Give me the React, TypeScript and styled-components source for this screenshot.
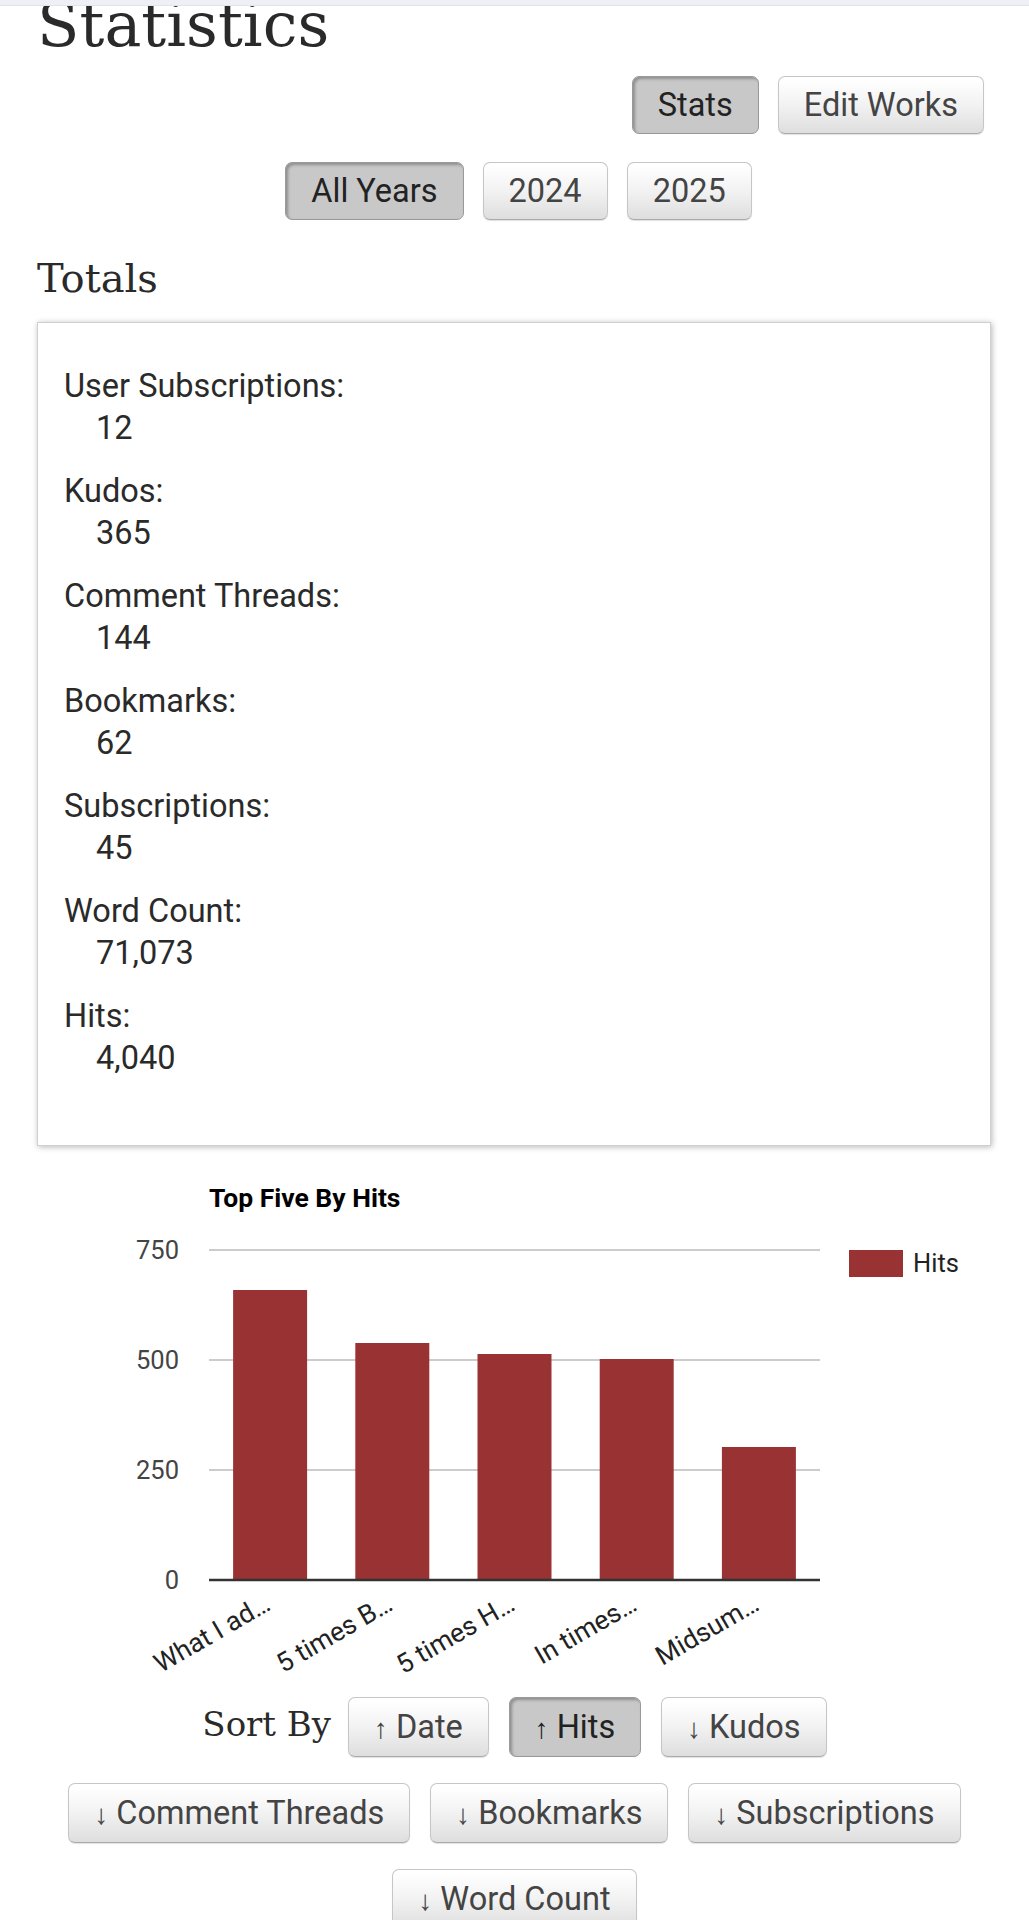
import React from "react";
import styled, { createGlobalStyle } from "styled-components";

const GlobalStyle = createGlobalStyle`
  html, body {
    margin: 0;
    padding: 0;
    background: #fff;
  }
  body {
    font-family: Roboto, "Liberation Sans", Arial, sans-serif;
    color: #2a2a2a;
  }
`;

const totals = [
  { label: "User Subscriptions:", value: "12" },
  { label: "Kudos:", value: "365" },
  { label: "Comment Threads:", value: "144" },
  { label: "Bookmarks:", value: "62" },
  { label: "Subscriptions:", value: "45" },
  { label: "Word Count:", value: "71,073" },
  { label: "Hits:", value: "4,040" },
];

const bars = [
  { title: "What I ad…", height: 290 },
  { title: "5 times B…", height: 237 },
  { title: "5 times H…", height: 226 },
  { title: "In times…", height: 221 },
  { title: "Midsum…", height: 133 },
];

const sortOptions = [
  { arrow: "↑", label: "Date" },
  { arrow: "↑", label: "Hits", current: true },
  { arrow: "↓", label: "Kudos" },
  { arrow: "↓", label: "Comment Threads" },
  { arrow: "↓", label: "Bookmarks" },
  { arrow: "↓", label: "Subscriptions" },
  { arrow: "↓", label: "Word Count" },
];

const App: React.FC = () => {
  const axisY = 421;
  const slot = 611 / 5;
  return (
    <>
      <GlobalStyle />
      <TopBand />
      <Page>
        <Heading>Statistics</Heading>
        <NavRow>
          <Button $current>Stats</Button>
          <Button>Edit Works</Button>
        </NavRow>
        <YearRow>
          <Button $current>All Years</Button>
          <Button>2024</Button>
          <Button>2025</Button>
        </YearRow>

        <SubHeading>Totals</SubHeading>
        <TotalsBox>
          <dl>
            {totals.map((t) => (
              <React.Fragment key={t.label}>
                <dt>{t.label}</dt>
                <dd>{t.value}</dd>
              </React.Fragment>
            ))}
          </dl>
        </TotalsBox>

        <Chart width="955" height="520" viewBox="0 0 955 520">
          <text x="172" y="48" fontSize="26.5" fontWeight="700" fill="#000">
            Top Five By Hits
          </text>
          {[750, 500, 250].map((v, i) => (
            <g key={v}>
              <line x1="172" x2="783" y1={91 + i * 110} y2={91 + i * 110} stroke="#cccccc" strokeWidth="2" />
              <text x="142" y={100 + i * 110} fontSize="25.5" fill="#444" textAnchor="end">
                {v}
              </text>
            </g>
          ))}
          <text x="142" y={axisY + 9} fontSize="25.5" fill="#444" textAnchor="end">
            0
          </text>
          {bars.map((b, i) => {
            const cx = 172 + slot / 2 + i * slot;
            return (
              <g key={b.title}>
                <rect x={cx - 37} y={axisY - b.height} width="74" height={b.height} fill="#993333" />
                <text
                  x={cx + 2}
                  y={axisY + 29}
                  fontSize="26.5"
                  fill="#222"
                  textAnchor="end"
                  transform={`rotate(-30 ${cx + 2} ${axisY + 29})`}
                >
                  {b.title}
                </text>
              </g>
            );
          })}
          <line x1="172" x2="783" y1={axisY} y2={axisY} stroke="#333" strokeWidth="2.5" />
          <rect x="812" y="91" width="54" height="27" fill="#993333" />
          <text x="876" y="113" fontSize="25.5" fill="#222">
            Hits
          </text>
        </Chart>

        <SortList>
          <SortLabel>Sort By</SortLabel>
          {sortOptions.map((o) => (
            <Button key={o.label} $current={o.current} $tall>
              <Arrow>{o.arrow}</Arrow> {o.label}
            </Button>
          ))}
        </SortList>
      </Page>
    </>
  );
};

export default App;

const TopBand = styled.div`
  position: fixed;
  top: 0;
  left: 0;
  right: 0;
  height: 5px;
  background: #edf0f5;
  border-bottom: 1px solid #e1e5eb;
  z-index: 2;
`;

const Page = styled.main`
  padding: 0 37px 40px;
  overflow: hidden;
`;

const Heading = styled.h2`
  margin: -6px 0 0;
  font-family: "DejaVu Serif", "Liberation Serif", serif;
  font-size: 62px;
  line-height: 62px;
  font-weight: 400;
  color: #2a2a2a;
`;

const NavRow = styled.div`
  display: flex;
  justify-content: flex-end;
  gap: 19px;
  margin-top: 20px;
  padding-right: 8px;
`;

const YearRow = styled.div`
  display: flex;
  justify-content: center;
  gap: 19px;
  margin-top: 28px;
  padding-left: 8px;
`;

const Button = styled.button<{ $current?: boolean; $tall?: boolean }>`
  box-sizing: border-box;
  height: ${(p) => (p.$tall ? "60px" : "58px")};
  padding: 0 25px;
  font-family: Roboto, "Liberation Sans", sans-serif;
  font-size: 32.5px;
  line-height: 1;
  white-space: nowrap;
  border-radius: 7px;
  cursor: pointer;
  color: ${(p) => (p.$current ? "#222" : "#444")};
  border: 1px solid ${(p) => (p.$current ? "#9a9a9a" : "#c6c6c6")};
  border-bottom-color: ${(p) => (p.$current ? "#9a9a9a" : "#aaa")};
  background: ${(p) =>
    p.$current ? "#c8c8c8" : "linear-gradient(#ffffff 5%, #f2f2f2 50%, #dedede 100%)"};
  box-shadow: ${(p) =>
    p.$current ? "inset 2px 2px 3px #8f8f8f" : "0 1px 1px rgba(0, 0, 0, 0.12)"};
`;

const Arrow = styled.span`
  font-family: "Liberation Sans", sans-serif;
  font-size: 0.85em;
`;

const SubHeading = styled.h3`
  margin: 34px 0 20px;
  font-family: "DejaVu Serif", "Liberation Serif", serif;
  font-size: 40px;
  line-height: 48px;
  font-weight: 400;
  color: #2a2a2a;
`;

const TotalsBox = styled.div`
  box-sizing: border-box;
  width: 954px;
  height: 824px;
  padding: 42px 26px 0;
  border: 1px solid #d0d0d0;
  box-shadow: 1px 1px 6px #b8b8b8;
  background: #fff;

  dl {
    margin: 0;
  }

  dt,
  dd {
    font-size: 32.5px;
    line-height: 42px;
    color: #2a2a2a;
  }

  dd {
    margin: 0 0 21px 32px;
  }
`;

const Chart = styled.svg`
  display: block;
  margin-top: 13px;
  font-family: Roboto, "Liberation Sans", sans-serif;
`;

const SortList = styled.div`
  display: flex;
  flex-wrap: wrap;
  justify-content: center;
  align-items: center;
  column-gap: 20px;
  row-gap: 26px;
  margin-top: 18px;
`;

const SortLabel = styled.span`
  font-family: "DejaVu Serif", "Liberation Serif", serif;
  font-size: 34px;
  line-height: 40px;
  color: #2a2a2a;
  margin-right: -3px;
  position: relative;
  top: -3px;
`;
